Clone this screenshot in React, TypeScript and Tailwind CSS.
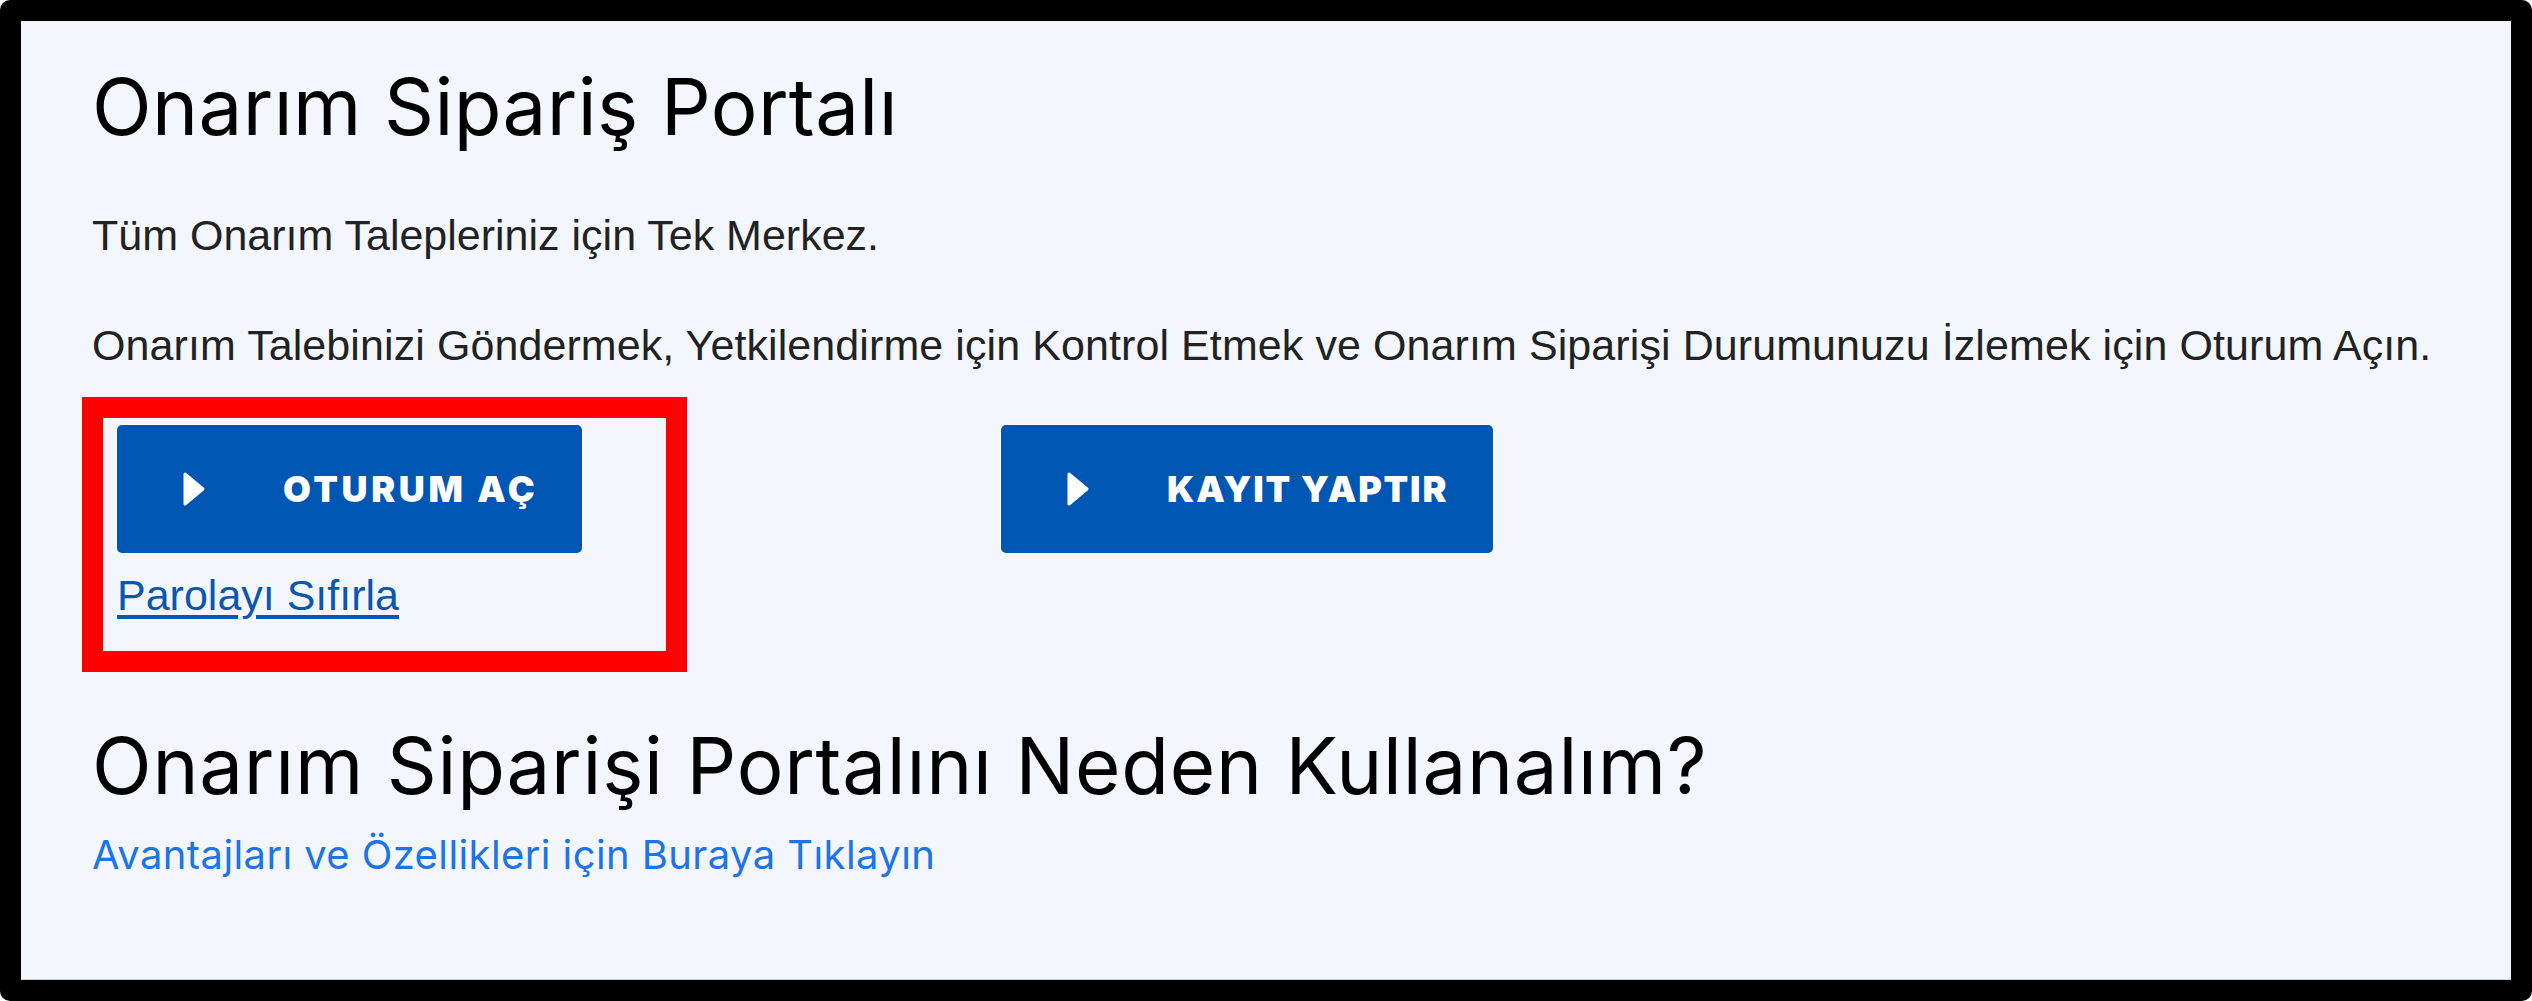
const heading = "font-['Inter',sans-serif]";
const body = "font-['Liberation_Sans',Arial,sans-serif]";

function PlayIcon() {
  return (
    <svg width="24" height="36" viewBox="0 0 24 36" className="shrink-0">
      <polygon
        points="3,3 21,18 3,33"
        fill="#ffffff"
        stroke="#ffffff"
        strokeWidth="3"
        strokeLinejoin="round"
      />
    </svg>
  );
}

function ActionButton({ label, width, track }: { label: string; width: string; track: string }) {
  return (
    <button
      className={`flex h-[128px] ${width} items-center rounded-[5px] bg-[#0056b3] pl-[65px] shadow-[0_0_0_1px_rgba(255,255,255,0.85)]`}
    >
      <PlayIcon />
      <span
        className={`ml-[77px] text-[36px] leading-none font-black ${track} text-white ${heading}`}
      >
        {label}
      </span>
    </button>
  );
}

export default function App() {
  return (
    <div className="h-[1001px] w-[2532px] bg-white">
      <div className="h-full w-full rounded-[10px] bg-black p-[21px]">
        <div className="h-full w-full border-b border-[#c9ced6] bg-[#f3f7fd] pt-[47px] pl-[71px]">
          <h1
            className={`text-[78px] leading-[78px] font-normal tracking-[0.005em] text-black ${heading}`}
          >
            Onarım Sipariş Portalı
          </h1>

          <p className={`mt-[68px] text-[43px] leading-[43px] text-[#222222] ${body}`}>
            Tüm Onarım Talepleriniz için Tek Merkez.
          </p>
          <p
            className={`mt-[67px] text-[43px] leading-[43px] tracking-[0.002em] text-[#222222] ${body}`}
          >
            Onarım Talebinizi Göndermek, Yetkilendirme için Kontrol Etmek ve Onarım Siparişi
            Durumunuzu İzlemek için Oturum Açın.
          </p>

          <div className="mt-[30px] -ml-[10px] flex items-start">
            <div className="w-[605px] border-[21px] border-[#ff0000] pt-[7px] pb-[34px] pl-[14px]">
              <ActionButton label="OTURUM AÇ" width="w-[465px]" track="tracking-[0.1em]" />
              <a
                href="#"
                className={`mt-[21px] block w-fit text-[43px] leading-[43px] text-[#0b57b0] underline underline-offset-[5px] ${body}`}
              >
                Parolayı Sıfırla
              </a>
            </div>
            <div className="mt-[28px] ml-[314px]">
              <ActionButton label="KAYIT YAPTIR" width="w-[492px]" track="tracking-[0.05em]" />
            </div>
          </div>

          <h2
            className={`mt-[55px] text-[78px] leading-[78px] font-normal tracking-[0.01em] text-black ${heading}`}
          >
            Onarım Siparişi Portalını Neden Kullanalım?
          </h2>
          <a
            href="#"
            className={`mt-[30px] block w-fit text-[40px] leading-[40px] tracking-[0.01em] text-[#1d74e6] ${heading}`}
          >
            Avantajları ve Özellikleri için Buraya Tıklayın
          </a>
        </div>
      </div>
    </div>
  );
}
